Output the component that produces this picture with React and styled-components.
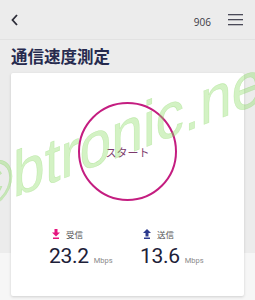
import React from 'react';
import styled, { createGlobalStyle } from 'styled-components';

const GlobalStyle = createGlobalStyle`
  html, body {
    margin: 0;
    padding: 0;
  }
  body {
    font-family: "Noto Sans CJK JP", "Noto Sans", sans-serif;
    background: #f6f6f6;
  }
`;

const Page = styled.div`
  position: relative;
  width: 255px;
  height: 300px;
  overflow: hidden;
  background: linear-gradient(#ececec 253px, #f6f6f6 253px);
`;

const Header = styled.header`
  height: 39px;
  display: flex;
  align-items: center;
  padding: 0 12px 0 10px;
  border-bottom: 1px solid #e2e2e2;
`;

const IconButton = styled.button`
  display: flex;
  align-items: center;
  justify-content: center;
  padding: 0;
  border: none;
  background: none;
  color: #3a3a48;
  cursor: pointer;
`;

const Spacer = styled.div`
  flex: 1;
`;

const Count = styled.span`
  font-family: "Open Sans", "Noto Sans", sans-serif;
  font-size: 10px;
  color: #3a3a44;
  margin-right: 17px;
  margin-top: 4px;
`;

const Title = styled.h1`
  margin: 0;
  padding: 5px 11px 6px;
  font-size: 16.5px;
  line-height: 22px;
  font-weight: 700;
  color: #262a4e;
`;

const Card = styled.section`
  margin: 0 11px;
  height: 223px;
  background: #fff;
  border-radius: 2px;
  box-shadow: 0 1px 3px rgba(0, 0, 0, 0.16);
  display: flex;
  flex-direction: column;
  align-items: center;
`;

const StartButton = styled.button`
  margin-top: 29px;
  width: 99px;
  height: 99px;
  border-radius: 50%;
  border: 2px solid #c41d80;
  background: #fff;
  color: #7c3a6c;
  font-family: "Noto Sans CJK JP", sans-serif;
  font-size: 11px;
  cursor: pointer;
  padding: 0;
`;

const Stats = styled.div`
  margin-top: 26px;
  width: 100%;
  display: grid;
  grid-template-columns: 91px 1fr;
  padding-left: 38px;
  box-sizing: border-box;
`;

const Stat = styled.div`
  display: flex;
  flex-direction: column;
`;

const Label = styled.div`
  display: flex;
  align-items: center;
  gap: 6px;
  font-size: 8.5px;
  color: #555;
  height: 14px;
  padding-left: 3px;
`;

const Value = styled.div`
  display: flex;
  align-items: baseline;
  gap: 5px;
  margin-top: 3px;
`;

const Number = styled.span`
  font-family: "Roboto", "Noto Sans", sans-serif;
  font-size: 21px;
  color: #1d2038;
  letter-spacing: -0.3px;
`;

const Unit = styled.span`
  font-family: "Roboto", "Noto Sans", sans-serif;
  font-size: 7.5px;
  color: #8a8a8a;
`;

const Watermark = styled.div`
  position: absolute;
  left: -29px;
  top: 167px;
  font-family: "Liberation Sans", Arial, sans-serif;
  font-size: 57px;
  line-height: 1;
  color: rgba(140, 220, 100, 0.38);
  -webkit-text-stroke: 0.5px rgba(120, 210, 80, 0.3);
  white-space: nowrap;
  transform: skewY(-21deg) scaleY(1.12);
  transform-origin: left bottom;
  pointer-events: none;
`;

const Arrow = ({ color, up }) => (
  <svg width="8" height="10" viewBox="0 0 8 10">
    {up ? (
      <path d="M4 0 L8 4 L5.5 4 L5.5 7.5 L2.5 7.5 L2.5 4 L0 4 Z" fill={color} />
    ) : (
      <path d="M2.5 0 L5.5 0 L5.5 3.5 L8 3.5 L4 7.5 L0 3.5 L2.5 3.5 Z" fill={color} />
    )}
    <rect x="1" y="8.5" width="6" height="1.5" fill={color} />
  </svg>
);

export default function App() {
  return (
    <>
      <GlobalStyle />
      <Page>
        <Header>
          <IconButton aria-label="back">
            <svg width="10" height="14" viewBox="0 0 10 14">
              <path d="M7 2 L2.5 7 L7 12" fill="none" stroke="#2c2c38" strokeWidth="1.8" />
            </svg>
          </IconButton>
          <Spacer />
          <Count>906</Count>
          <IconButton aria-label="menu">
            <svg width="15" height="13" viewBox="0 0 15 13">
              <rect x="0" y="1" width="15" height="1.3" fill="#4a4a58" />
              <rect x="0" y="6" width="15" height="1.3" fill="#4a4a58" />
              <rect x="0" y="11" width="15" height="1.3" fill="#4a4a58" />
            </svg>
          </IconButton>
        </Header>
        <Title>通信速度測定</Title>
        <Card>
          <StartButton>スタート</StartButton>
          <Stats>
            <Stat>
              <Label>
                <Arrow color="#e5157f" />
                受信
              </Label>
              <Value>
                <Number>23.2</Number>
                <Unit>Mbps</Unit>
              </Value>
            </Stat>
            <Stat>
              <Label>
                <Arrow color="#2c3a8e" up />
                送信
              </Label>
              <Value>
                <Number>13.6</Number>
                <Unit>Mbps</Unit>
              </Value>
            </Stat>
          </Stats>
        </Card>
        <Watermark>©btronic.net</Watermark>
      </Page>
    </>
  );
}
